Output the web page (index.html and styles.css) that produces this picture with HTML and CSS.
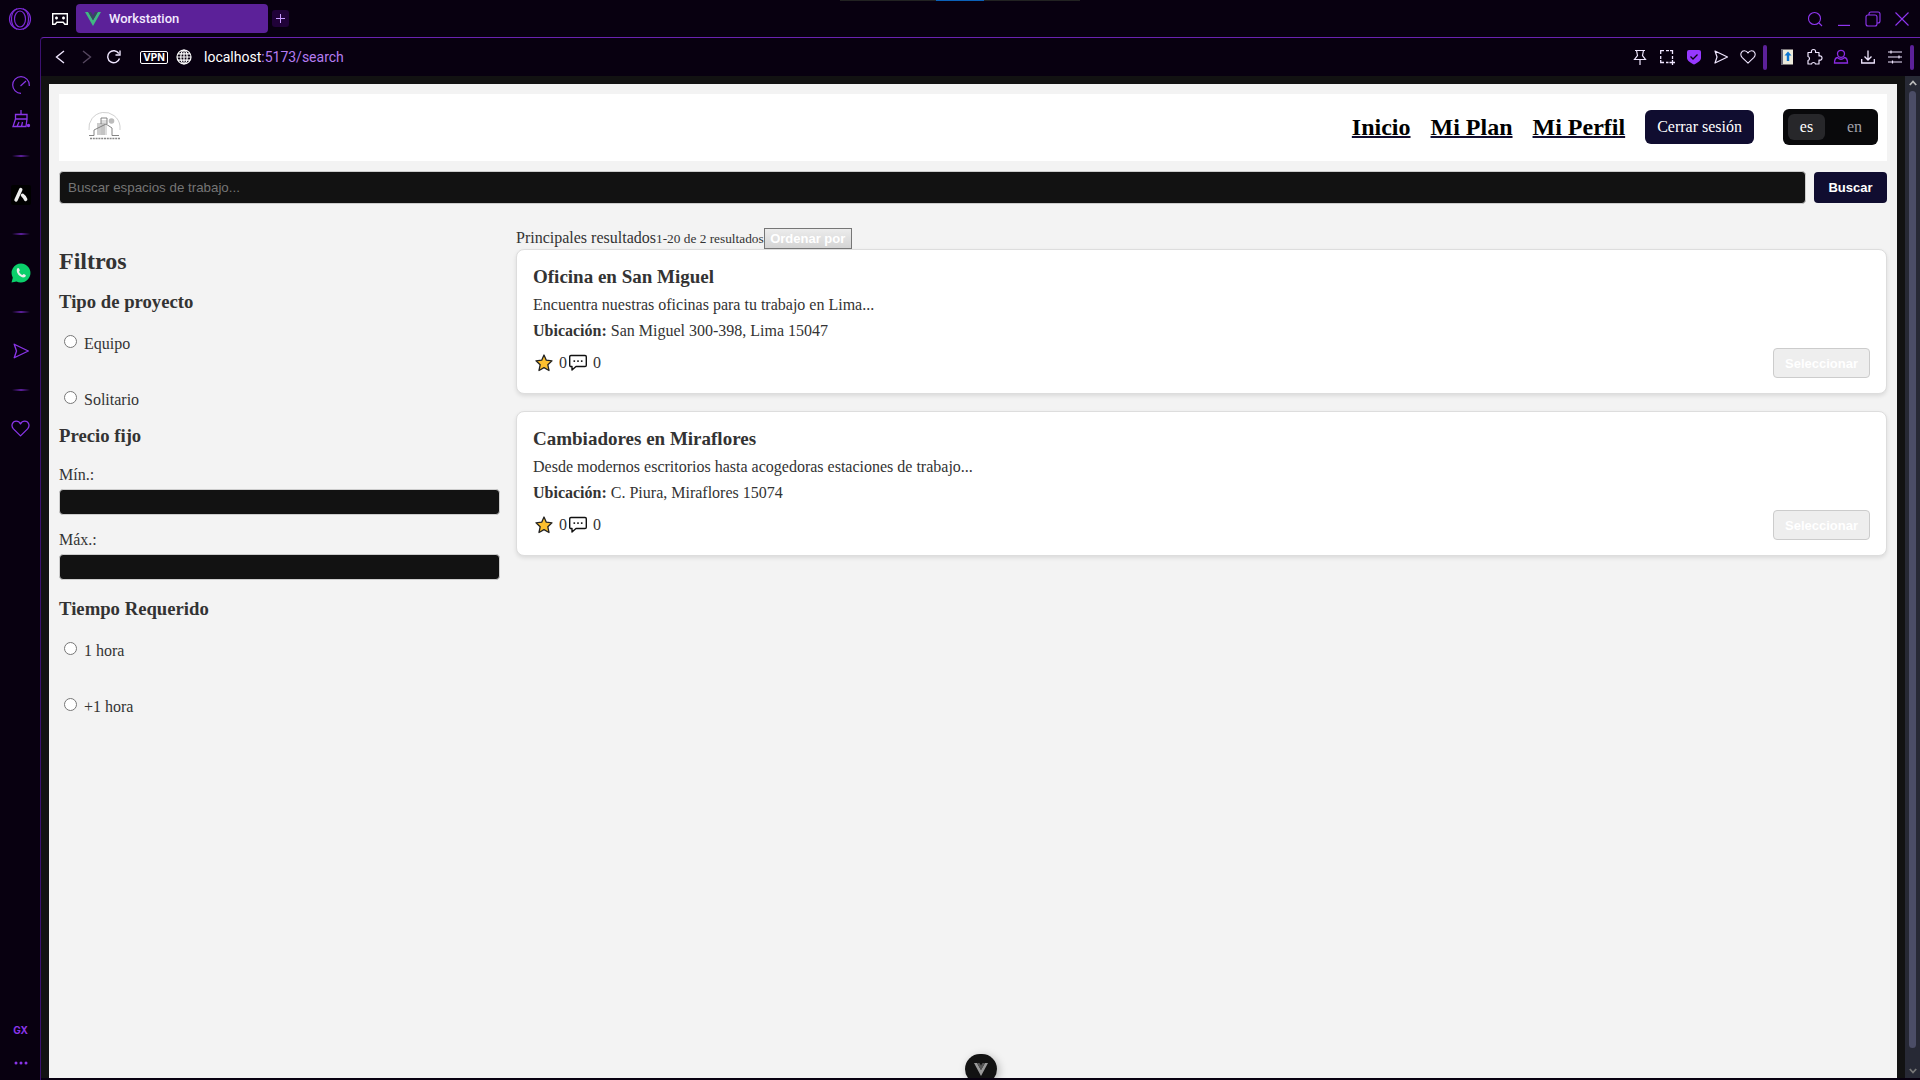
FILE: index.html
```html
<!DOCTYPE html>
<html lang="es">
<head>
<meta charset="utf-8">
<title>Workstation</title>
<link rel="stylesheet" href="styles.css">
</head>
<body>
<svg class="defs" aria-hidden="true">
  <symbol id="star" viewBox="0 0 18 18"><path d="M9 1l2.300 5.200 5.700.6-4.200 3.900 1.200 5.800L9 13.600l-5 2.900 1.200-5.800L1 6.800l5.700-.6z" fill="#fdc02f" stroke="#222" stroke-width="1.300" stroke-linejoin="round"/></symbol>
  <symbol id="chat" viewBox="0 0 18 18"><path d="M2 1.500h14q1.300 0 1.300 1.300v8.400q0 1.300-1.300 1.300H7L3 16v-3.500H2q-1.300 0-1.300-1.300V2.800Q.7 1.500 2 1.500z" fill="none" stroke="#111" stroke-width="1.400" stroke-linejoin="round"/><path d="M4.500 6.300h1.600v1.600H4.500zM8.200 6.300h1.600v1.600H8.200zM11.900 6.300h1.600v1.600h-1.600z" fill="#222"/></symbol>
  <symbol id="send" viewBox="0 0 16 16"><path d="M2 2l12.500 6L2 14l2-6z" fill="none" stroke="currentColor" stroke-width="1.200" stroke-linejoin="round"/></symbol>
  <symbol id="heart" viewBox="0 0 18 18"><path d="M9 16L2.300 9.400C-.5 6 1.500 2 4.900 2 6.800 2 8.200 3 9 4.600 9.800 3 11.200 2 13.100 2c3.400 0 5.400 4 2.600 7.400z" fill="none" stroke="currentColor" stroke-width="1.200" stroke-linejoin="round"/></symbol>
</svg>
<div class="browser">
  <div class="tabstrip">
    <button class="opera" aria-label="Menú"><svg width="24" height="24" viewBox="0 0 24 24" fill="none" stroke="currentColor" stroke-width="1.200"><circle cx="12" cy="12" r="10.500"/><ellipse cx="12" cy="12" rx="5.500" ry="8"/><path d="M9 1.800C4 4 3.500 8 3.500 12S4 20 9 22.200M15 1.800c5 2.200 5.500 6.200 5.500 10.200s-.5 8-5.500 10.200"/></svg></button>
    <button class="corner" aria-label="GX Corner"><svg width="18" height="16" viewBox="0 0 18 16"><path d="M1.700 2.700h14.600v10.600h-2.500l-1.600-2H5.800l-1.600 2H1.700z" fill="none" stroke="#fff" stroke-width="1.400"/><path d="M4 7h3M5.500 5.500v3M11 7h3M12.500 5.500v3" stroke="#fff" stroke-width="1.500"/></svg></button>
    <div class="tab"><svg width="16" height="14" viewBox="0 0 16 14"><path d="M0 0h3.200L8 8.300 12.800 0H16L8 14z" fill="#41b883"/><path d="M3.200 0H6l2 3.500L10 0h2.800L8 8.300z" fill="#35495e"/></svg><span>Workstation</span></div>
    <button class="newtab" aria-label="Nueva pestaña"><svg width="9" height="9" viewBox="0 0 9 9"><path d="M4.500 0v9M0 4.500h9" stroke="#c79aff" stroke-width="1"/></svg></button>
    <div class="grip"></div>
    <div class="winbtns">
      <button aria-label="Buscar pestañas"><svg width="16" height="16" viewBox="0 0 16 16" fill="none" stroke="currentColor" stroke-width="1.100"><circle cx="7.500" cy="7.500" r="6"/><path d="M12 12l3 3"/></svg></button>
      <button aria-label="Minimizar"><svg width="14" height="14" viewBox="0 0 14 14"><path d="M1 13.400h12" stroke="currentColor" stroke-width="1.200"/></svg></button>
      <button aria-label="Restaurar"><svg width="16" height="16" viewBox="0 0 16 16" fill="none" stroke="currentColor" stroke-width="1.100"><rect x="1" y="4" width="11" height="11" rx="2"/><path d="M4 4V3q0-2 2-2h7q2 0 2 2v7q0 2-2 2h-1"/></svg></button>
      <button aria-label="Cerrar"><svg width="14" height="14" viewBox="0 0 14 14"><path d="M.5.500l13 13M13.500.500l-13 13" stroke="currentColor" stroke-width="1.100"/></svg></button>
    </div>
  </div>

  <nav class="sidebar" aria-label="Barra lateral">
    <button class="short" aria-label="GX Control"><svg width="20" height="20" viewBox="0 0 20 20" fill="none" stroke="currentColor" stroke-width="1.200"><path d="M10 18.300A8.300 8.300 0 1 1 18.300 10v1"/><path d="M9.500 11l5.500-5"/></svg></button>
    <button class="short" aria-label="GX Cleaner"><svg width="20" height="20" viewBox="0 0 20 20" fill="none" stroke="currentColor" stroke-width="1.300"><path d="M10 1v4M4.500 5.500h11.500V10H4.500zM4.500 10L2 17.500h13L16 10M6 17.500L8 13M10.500 17.500l1-4.500"/><circle cx="17.500" cy="16.500" r="1" fill="currentColor"/></svg></button>
    <i></i>
    <button aria-label="Aria"><svg width="20" height="20" viewBox="0 0 20 20"><rect width="20" height="20" rx="2" fill="#000"/><path d="M9.800 4.500L5 15M11.500 10.200q2 1.300 3.200 4.300" fill="none" stroke="#eee" stroke-width="3.400" stroke-linecap="round"/></svg></button>
    <i></i>
    <button aria-label="WhatsApp"><svg width="20" height="20" viewBox="0 0 20 20"><path d="M10 .500a9.500 9.500 0 1 1-4.500 17.900L.500 19.500l1.300-4.800A9.500 9.500 0 0 1 10 .500z" fill="#0bcf6b"/><path d="M6 5.800c.8-1.300 1.800-1 2.200 0l.6 1.500c.2.600-.9 1.200-.7 1.600.7 1.400 1.800 2.400 3.200 3 .5.200 1-1.200 1.600-.900l1.700.9c.6.400-.1 2-1.300 2.400C10 15.200 4.500 10.500 6 5.800z" fill="#eee"/></svg></button>
    <i></i>
    <button aria-label="My Flow"><svg width="18" height="18"><use href="#send"/></svg></button>
    <i></i>
    <button aria-label="Favoritos"><svg width="19" height="19"><use href="#heart"/></svg></button>
    <span class="fill"></span>
    <button class="short gx">GX</button>
    <button class="short" aria-label="Más"><svg width="14" height="4" viewBox="0 0 14 4" fill="currentColor"><circle cx="2" cy="2" r="1.500"/><circle cx="7" cy="2" r="1.500"/><circle cx="12" cy="2" r="1.500"/></svg></button>
  </nav>

  <div class="window">
    <div class="addressbar">
      <div class="navbtns">
        <button aria-label="Atrás"><svg width="10" height="14" viewBox="0 0 10 14"><path d="M9 1L1.500 7 9 13" fill="none" stroke="currentColor" stroke-width="1.400"/></svg></button>
        <button class="off" aria-label="Adelante"><svg width="10" height="14" viewBox="0 0 10 14"><path d="M1 1l7.500 6L1 13" fill="none" stroke="currentColor" stroke-width="1.400"/></svg></button>
        <button aria-label="Recargar"><svg width="14" height="14" viewBox="0 0 14 14" fill="none" stroke="currentColor" stroke-width="1.400"><path d="M12.500 8.500A6 6 0 1 1 11.800 3.500"/><path d="M13 .500V5H8.500"/></svg></button>
      </div>
      <span class="vpn">VPN</span>
      <svg width="16" height="16" viewBox="0 0 16 16" fill="none" stroke="#fff" stroke-width="1.200"><circle cx="8" cy="8" r="7"/><ellipse cx="8" cy="8" rx="3.200" ry="7"/><path d="M8 1v14M1 8h14M2 4.800h12M2 11.200h12"/></svg>
      <span class="url"><b>localhost</b>:5173/search</span>
      <div class="tools">
        <button aria-label="Fijar"><svg width="16" height="16" viewBox="0 0 16 16" fill="none" stroke="currentColor" stroke-width="1.200"><path d="M3 1.500h10M4.500 1.500l1 5L2.500 10.500h11l-3-4 1-5M8 10.500V16"/></svg></button>
        <button aria-label="Instantánea"><svg width="16" height="16" viewBox="0 0 16 16" fill="none" stroke="currentColor" stroke-width="1.300"><path d="M1.700 5V1.700H5M7 1.700h3M11 1.700h2.500V5M13.500 7v3M1.700 7v3M1.700 11v2.500H5M7 13.500h2.500M10.500 13.500H16M13.500 11v5"/></svg></button>
        <button aria-label="Bloqueador"><svg width="16" height="16" viewBox="0 0 16 16"><path d="M3 1h10q2 0 2 2v6c0 3-4 5-7 6.500C5 14 1 12 1 9V3q0-2 2-2z" fill="#9638ff"/><path d="M4.500 7.500l2.500 2.500 4.500-4.500" fill="none" stroke="#0b0014" stroke-width="1.300"/></svg></button>
        <button aria-label="Enviar"><svg width="16" height="16"><use href="#send"/></svg></button>
        <button aria-label="Marcador"><svg width="16" height="16"><use href="#heart"/></svg></button>
      </div>
      <span class="bar"></span>
      <div class="tools ext">
        <button aria-label="Diccionario"><svg width="14" height="16" viewBox="0 0 14 16"><rect x="1" y=".5" width="12" height="15" fill="#eceadb"/><path d="M1 .500h2v15H1z" fill="#667"/><path d="M8 2.500l3.500 4H9.200V12H6.800V6.500H4.500z" fill="#0b75d1"/></svg></button>
        <button aria-label="Extensiones"><svg width="18" height="18" viewBox="0 0 18 18"><path d="M3 4.500h3.500C6 2.500 7 1.500 8.500 1.500s2.500 1 2 3H14V8c2-.5 3 .5 3 2s-1 2.500-3 2v4h-3.500c-.5-2-3.500-2-4 0H3v-3.500c2-.500 2-3.500 0-4z" fill="none" stroke="currentColor" stroke-width="1.200" stroke-linejoin="round"/></svg></button>
        <button class="violet" aria-label="Perfil"><svg width="16" height="16" viewBox="0 0 16 16" fill="none" stroke="currentColor" stroke-width="1.300"><circle cx="8" cy="4.800" r="3.500"/><path d="M4.500 8.500Q1.500 9 1.500 14h13q0-5-3-5.500Q8 12 4.500 8.500z"/></svg></button>
        <button aria-label="Descargas"><svg width="16" height="16" viewBox="0 0 16 16" fill="none" stroke="currentColor" stroke-width="1.300"><path d="M8 1.500v9M4.500 7.500L8 11l3.500-3.500M1.700 10v4h12.600v-4"/></svg></button>
        <button aria-label="Configuración sencilla"><svg width="14" height="14" viewBox="0 0 14 14" stroke="currentColor" stroke-width="1.200"><path d="M0 2h14M0 7h14M0 12h14M3 .500v3M11 5.500v3M4.500 10.500v3"/></svg></button>
      </div>
      <span class="bar"></span>
    </div>

    <div class="viewport">
      <div class="page">
        <header class="header">
          <svg class="logo" viewBox="0 0 34 30" role="img" aria-label="Workstation"><path d="M2 18a15.500 15.500 0 0 1 31-4v4" fill="none" stroke="#bbb" stroke-width=".7"/><path d="M10 11h8v12h-8z" fill="#ccc"/><path d="M14 8h6v15h-6z" fill="#bbb" fill-opacity=".5"/><circle cx="24.500" cy="9" r="2.800" fill="#bbb"/><path d="M2 23.500h5V18l12-6 6 4v7.500h7M14 12V6h6v6" fill="none" stroke="#777" stroke-width=".9"/><path d="M3 26.500h30" stroke="#888" stroke-width="1.600" stroke-dasharray="2 .8"/></svg>
          <nav class="links"><a href="#inicio">Inicio</a><a href="#plan">Mi Plan</a><a href="#perfil">Mi Perfil</a><button class="logout">Cerrar sesión</button></nav>
          <div class="lang"><button class="on">es</button><button>en</button></div>
        </header>
        <form class="search"><input type="text" aria-label="Buscar" placeholder="Buscar espacios de trabajo..."><button type="button">Buscar</button></form>
        <div class="columns">
          <aside class="filters">
            <h2>Filtros</h2>
            <h3>Tipo de proyecto</h3>
            <label class="opt"><input type="radio" name="tipo">Equipo</label>
            <label class="opt"><input type="radio" name="tipo">Solitario</label>
            <h3>Precio fijo</h3>
            <label class="num">Mín.:<input type="text"></label>
            <label class="num">Máx.:<input type="text"></label>
            <h3>Tiempo Requerido</h3>
            <label class="opt"><input type="radio" name="tiempo">1 hora</label>
            <label class="opt"><input type="radio" name="tiempo">+1 hora</label>
          </aside>
          <main class="results">
            <div class="summary"><span>Principales resultados</span><small>1-20 de 2 resultados</small><button>Ordenar por</button></div>
            <article class="card">
              <h3>Oficina en San Miguel</h3>
              <p>Encuentra nuestras oficinas para tu trabajo en Lima...</p>
              <p><strong>Ubicación:</strong> San Miguel 300-398, Lima 15047</p>
              <div class="foot"><span class="stat"><svg width="18" height="18"><use href="#star"/></svg>0</span><span class="stat"><svg width="18" height="18"><use href="#chat"/></svg>0</span><button>Seleccionar</button></div>
            </article>
            <article class="card">
              <h3>Cambiadores en Miraflores</h3>
              <p>Desde modernos escritorios hasta acogedoras estaciones de trabajo...</p>
              <p><strong>Ubicación:</strong> C. Piura, Miraflores 15074</p>
              <div class="foot"><span class="stat"><svg width="18" height="18"><use href="#star"/></svg>0</span><span class="stat"><svg width="18" height="18"><use href="#chat"/></svg>0</span><button>Seleccionar</button></div>
            </article>
          </main>
        </div>
        <button class="devtools" aria-label="Vue DevTools"><svg width="14" height="13" viewBox="0 0 14 13"><path d="M0 0h3l4 7 4-7h3L7 13z" fill="#999"/><path d="M3 0h2.500L7 2.500 8.500 0H11L7 7z" fill="#555"/></svg></button>
      </div>
      <div class="scrollbar"><svg width="8" height="6" viewBox="0 0 8 6"><path d="M.8 5L4 1.500 7.200 5" fill="none" stroke="#bbb" stroke-width="1.800"/></svg><span class="thumb"></span><svg width="8" height="6" viewBox="0 0 8 6"><path d="M.8 1L4 4.500 7.200 1" fill="none" stroke="#777" stroke-width="1.800"/></svg></div>
    </div>
  </div>
</div>
</body>
</html>
```
FILE: styles.css
```css
* { box-sizing: border-box; }
body { margin: 0; background: #080010; }
button { margin: 0; padding: 0; border: 0; background: none; color: inherit; font: inherit; cursor: pointer; }
.defs { position: absolute; width: 0; height: 0; }

.browser {
  display: grid;
  grid-template-columns: 40px 1fr;
  grid-template-rows: 37px 1fr;
  height: 100vh;
  color: #9638ff;
  font-family: Inter, "Liberation Sans", sans-serif;
}

/* Tab strip */
.tabstrip { grid-column: 1 / -1; display: flex; align-items: center; position: relative; }
.tabstrip button { display: grid; place-items: center; }
.opera { width: 40px; color: #7c2bd6; }
.tabstrip .corner { width: 36px; padding-left: 4px; }
.tab {
  display: flex;
  align-items: center;
  gap: 8px;
  width: 192px;
  height: 29px;
  padding-left: 9px;
  border-radius: 4px;
  background: #5c2199;
  color: #f3eaff;
  font: 500 13px Roboto, sans-serif;
}
.newtab { width: 17px; height: 17px; margin-left: 4px; border-radius: 3px; background: #200238; }
.grip {
  position: absolute;
  top: 0;
  left: 50%;
  width: 240px;
  height: 1px;
  margin-left: -120px;
  background: linear-gradient(90deg, #222 96px, #0b61b8 96px 144px, #222 144px);
}
.winbtns { display: flex; margin-left: auto; padding-right: 4px; color: #8f35f0; }
.winbtns button { width: 29px; height: 24px; }

/* Side bar */
.sidebar { display: flex; flex-direction: column; align-items: center; padding: 31px 0 0 1px; color: #8a35e8; }
.sidebar button { display: grid; place-items: center; flex: 0 0 39px; width: 39px; }
.sidebar .short { flex-basis: 34px; }
.sidebar i {
  flex: 0 0 39px;
  width: 18px;
  background: linear-gradient(90deg, transparent, #5c1f9c 50%, transparent) center / 100% 2px no-repeat;
}
.sidebar .fill { flex: 1; }
.sidebar .gx { padding-top: 2px; font-size: 10px; font-weight: 700; }

/* Page window */
.window {
  display: flex;
  flex-direction: column;
  min-width: 0;
  border-top: 1px solid #6a22b0;
  border-left: 1px solid #3c1170;
  border-top-left-radius: 4px;
}
.addressbar { display: flex; align-items: center; height: 38px; padding: 0 6px 0 5px; color: #f0e6ff; }
.addressbar button { display: grid; place-items: center; width: 27px; height: 26px; }
.navbtns { display: flex; margin-right: 13px; }
.addressbar .off { color: #55465f; }
.vpn {
  width: 28px;
  margin-right: 8px;
  border: 1px solid #fff;
  border-radius: 2px;
  color: #fff;
  font-size: 10px;
  font-weight: 700;
  line-height: 11px;
  text-align: center;
}
.url { margin-left: 12px; color: #b57cf0; font: 14px/20px Roboto, sans-serif; }
.url b { color: #fff; font-weight: 400; }
.tools { display: flex; margin: 0 2px 0 auto; }
.tools.ext { margin: 0 2px 0 6px; }
.addressbar .violet { color: #8a2be2; }
.bar { width: 4px; height: 25px; border-radius: 2px; background: #5c2199; }

.viewport {
  flex: 1;
  display: flex;
  min-height: 0;
  margin-bottom: 2px;
  padding-left: 8px;
  background: #121212;
}
.scrollbar { display: flex; flex-direction: column; align-items: center; width: 15px; margin-left: 8px; padding: 4px 0; background: #272935; }
.thumb { flex: 1; width: 7px; margin: 5px 0 20px; border-radius: 4px; background: #4b4d66; }

/* Application */
.page {
  flex: 1;
  position: relative;
  min-width: 0;
  margin-top: 8px;
  padding: 10px;
  overflow: hidden;
  background: #f3f3f3;
  color: #333;
  font: 16px/18px "Liberation Serif", serif;
}
.header { display: flex; align-items: center; height: 67px; padding: 0 9px 2px 28px; background: #fff; }
.logo { width: 34px; height: 30px; }
.links { display: flex; align-items: center; gap: 20px; margin-left: auto; }
.links a {
  color: #000;
  font-size: 24px;
  font-weight: 700;
  line-height: 28px;
  text-decoration: underline #100d30 2px;
}
.logout { height: 34px; padding: 0 12px; border-radius: 6px; background: #100d30; color: #fff; }
.lang { display: flex; gap: 11px; margin-left: 29px; padding: 5px; border-radius: 6px; background: #09090b; }
.lang button { width: 37px; height: 26px; border-radius: 6px; color: #a1a1aa; }
.lang .on { background: #27272a; color: #fff; }

.search { display: flex; gap: 8px; margin-top: 10px; }
.search input, .num input { border: 1px solid #ccc; border-radius: 4px; background: #121212; color: #fff; font-family: "Liberation Sans", sans-serif; }
.search input { flex: 1; height: 33px; padding: 0 8px; }
.search input::placeholder { color: #757575; }
.search button, .foot button, .summary button { font: 700 13px "Liberation Sans", sans-serif; color: #fff; }
.search button { width: 73px; height: 31px; margin-top: 1px; border-radius: 4px; background: #100d30; }

.columns { display: flex; margin-top: 24px; }
.filters { width: 25%; padding: 19px 16px 0 0; }
.filters h2 { margin: 0; font-size: 24px; line-height: 28px; }
.filters h3 { margin: 16px 0 21px; line-height: 21px; }
.opt { display: flex; align-items: flex-start; height: 18px; margin-bottom: 38px; padding-left: 5px; gap: 7px; line-height: 22px; }
.opt input { width: 13px; height: 13px; margin: 2px 0 0; }
.filters .opt + h3 { margin-top: -20px; }
.num { display: block; margin: -1px 0 18px; }
.num input { display: block; width: 100%; height: 26px; margin-top: 5px; }
.num + .num { margin-top: -2px; }

.results { flex: 1; min-width: 0; }
.summary { display: flex; align-items: stretch; height: 21px; line-height: 20px; }
.summary small { line-height: 21px; }
.summary button { width: 88px; border: 1px solid #767676; background: linear-gradient(#ececec, #d4d4d4); }
.card {
  margin-bottom: 17px;
  padding: 16px 16px 15px;
  border: 1px solid #ddd;
  border-radius: 8px;
  background: #fff;
  box-shadow: 0 2px 4px rgba(0, 0, 0, .1);
}
.card h3 { margin: 0 0 9px; font-size: 19px; line-height: 21px; }
.card p { margin: 0 0 8px; }
.foot { display: flex; align-items: center; height: 30px; }
.stat { display: flex; align-items: center; gap: 6px; padding-left: 2px; }
.foot button { width: 97px; height: 30px; margin-left: auto; border: 1px solid #ccc; border-radius: 4px; background: #eee; }

.devtools {
  position: absolute;
  bottom: -6px;
  left: 50%;
  display: grid;
  place-items: center;
  width: 32px;
  height: 30px;
  margin-left: -8px;
  border-radius: 16px;
  background: #121212;
  box-shadow: 2px 2px 8px rgba(0, 0, 0, .25);
}
```
